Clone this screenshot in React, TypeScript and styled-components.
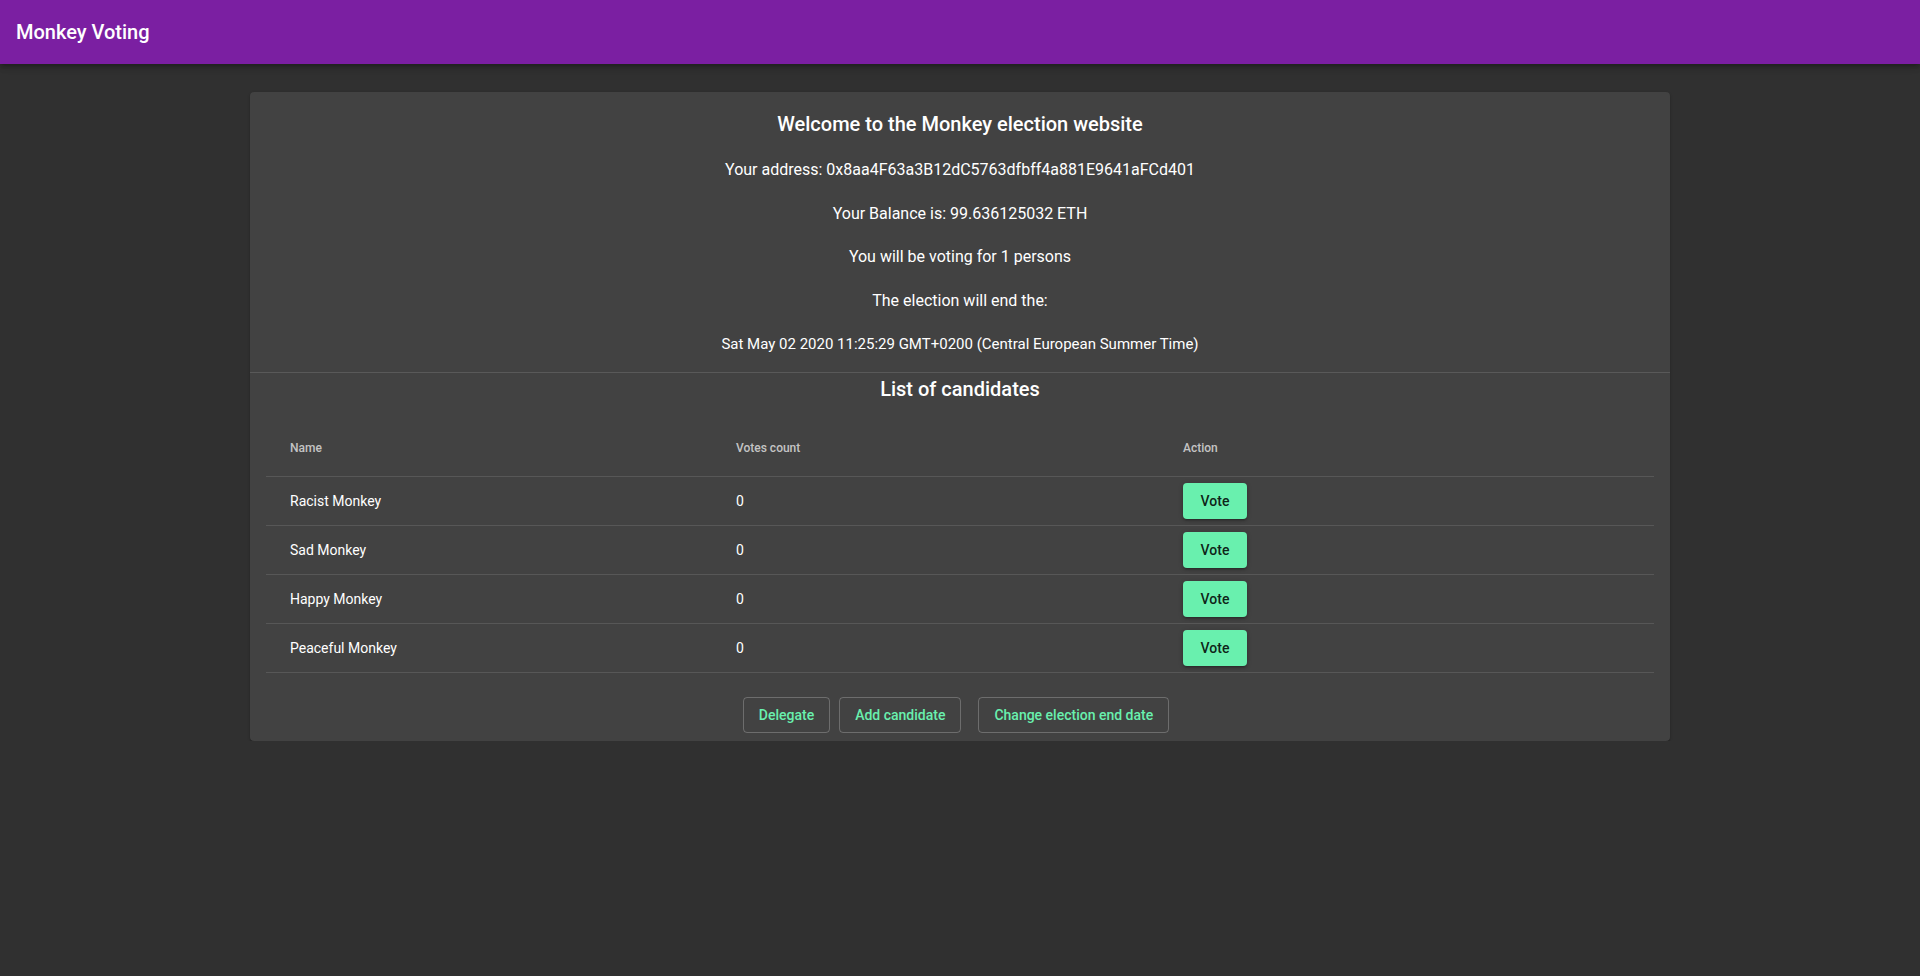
import React from "react";
import styled, { createGlobalStyle } from "styled-components";

const GlobalStyle = createGlobalStyle`
  html, body {
    margin: 0;
    padding: 0;
    background: #303030;
    font-family: Roboto, "Liberation Sans", Arial, sans-serif;
    color: #fff;
  }
  * { box-sizing: border-box; }
`;

const AppBar = styled.header`
  height: 64px;
  background: #7b1fa2;
  display: flex;
  align-items: center;
  padding: 0 16px;
  box-shadow: 0px 2px 4px -1px rgba(0,0,0,0.2), 0px 4px 5px 0px rgba(0,0,0,0.14), 0px 1px 10px 0px rgba(0,0,0,0.12);
  position: relative;
  z-index: 2;
`;

const AppTitle = styled.h1`
  margin: 0;
  font-size: 20px;
  font-weight: 500;
  line-height: 32px;
  color: #fff;
`;

const Main = styled.main`
  padding-top: 28px;
  display: flex;
  justify-content: center;
`;

const Card = styled.section`
  width: 1420px;
  background: #424242;
  border-radius: 4px;
  box-shadow: 0px 1px 3px 0px rgba(0,0,0,0.2), 0px 1px 1px 0px rgba(0,0,0,0.14), 0px 2px 1px -1px rgba(0,0,0,0.12);
  display: flex;
  flex-direction: column;
`;

const Intro = styled.div`
  padding: 16px 16px 16px;
  display: flex;
  flex-direction: column;
  align-items: center;
`;

const Heading = styled.h2`
  margin: 0;
  font-size: 20px;
  font-weight: 500;
  line-height: 32px;
  text-align: center;
  color: #fff;
`;

const Info = styled.p<{ $first?: boolean; $small?: boolean }>`
  margin: ${(p) => (p.$first ? "18px" : "19.5px")} 0 0;
  font-size: ${(p) => (p.$small ? "15px" : "16px")};
  line-height: 24px;
  text-align: center;
  color: #fff;
`;

const Divider = styled.hr`
  margin: 0;
  border: none;
  height: 1px;
  background: rgba(255,255,255,0.12);
`;

const TableSection = styled.div`
  padding: 0 16px 16px;
  display: flex;
  flex-direction: column;
  align-items: stretch;
`;

const TableWrap = styled.div`
  margin-top: 15px;
`;

const Table = styled.table`
  width: 100%;
  border-collapse: collapse;
  border-spacing: 0;
  table-layout: fixed;
`;

const HeadCell = styled.th<{ $w?: string }>`
  width: ${(p) => p.$w || "auto"};
  height: 56px;
  padding: 0 24px;
  text-align: left;
  font-size: 12px;
  font-weight: 500;
  color: rgba(255,255,255,0.7);
  border-bottom: 1px solid #575757;
  vertical-align: middle;
`;

const Cell = styled.td`
  height: 49px;
  padding: 0 24px;
  text-align: left;
  font-size: 14px;
  font-weight: 400;
  color: #fff;
  border-bottom: 1px solid #575757;
  vertical-align: middle;
`;

const VoteButton = styled.button`
  min-width: 64px;
  height: 36px;
  padding: 0 16px;
  border: none;
  border-radius: 4px;
  background: #69f0ae;
  color: rgba(0,0,0,0.87);
  font-family: inherit;
  font-size: 14px;
  font-weight: 500;
  cursor: pointer;
  display: inline-flex;
  align-items: center;
  justify-content: center;
  box-shadow: 0px 1px 5px 0px rgba(0,0,0,0.2), 0px 2px 2px 0px rgba(0,0,0,0.14), 0px 3px 1px -2px rgba(0,0,0,0.12);
`;

const Actions = styled.div`
  display: flex;
  justify-content: center;
  padding: 8px 8px 8px 0;
`;

const OutlineButton = styled.button<{ $gap?: number }>`
  height: 36px;
  padding: 0 15px;
  margin-left: ${(p) => p.$gap ?? 0}px;
  background: transparent;
  border: 1px solid rgba(255,255,255,0.23);
  border-radius: 4px;
  color: #69f0ae;
  font-family: inherit;
  font-size: 14px;
  font-weight: 500;
  cursor: pointer;
`;

const candidates = [
  { name: "Racist Monkey", votes: 0 },
  { name: "Sad Monkey", votes: 0 },
  { name: "Happy Monkey", votes: 0 },
  { name: "Peaceful Monkey", votes: 0 },
];

export default function App() {
  return (
    <>
      <GlobalStyle />
      <AppBar>
        <AppTitle>Monkey Voting</AppTitle>
      </AppBar>
      <Main>
        <Card>
          <Intro>
            <Heading>Welcome to the Monkey election website</Heading>
            <Info $first>Your address: 0x8aa4F63a3B12dC5763dfbff4a881E9641aFCd401</Info>
            <Info>Your Balance is: 99.636125032 ETH</Info>
            <Info>You will be voting for 1 persons</Info>
            <Info>The election will end the:</Info>
            <Info $small>Sat May 02 2020 11:25:29 GMT+0200 (Central European Summer Time)</Info>
          </Intro>
          <Divider />
          <TableSection>
            <Heading>List of candidates</Heading>
            <TableWrap>
              <Table>
                <thead>
                  <tr>
                    <HeadCell $w="446px">Name</HeadCell>
                    <HeadCell $w="447px">Votes count</HeadCell>
                    <HeadCell>Action</HeadCell>
                  </tr>
                </thead>
                <tbody>
                  {candidates.map((c) => (
                    <tr key={c.name}>
                      <Cell>{c.name}</Cell>
                      <Cell>{c.votes}</Cell>
                      <Cell>
                        <VoteButton>Vote</VoteButton>
                      </Cell>
                    </tr>
                  ))}
                </tbody>
              </Table>
            </TableWrap>
          </TableSection>
          <Actions>
            <OutlineButton>Delegate</OutlineButton>
            <OutlineButton $gap={9}>Add candidate</OutlineButton>
            <OutlineButton $gap={17}>Change election end date</OutlineButton>
          </Actions>
        </Card>
      </Main>
    </>
  );
}
